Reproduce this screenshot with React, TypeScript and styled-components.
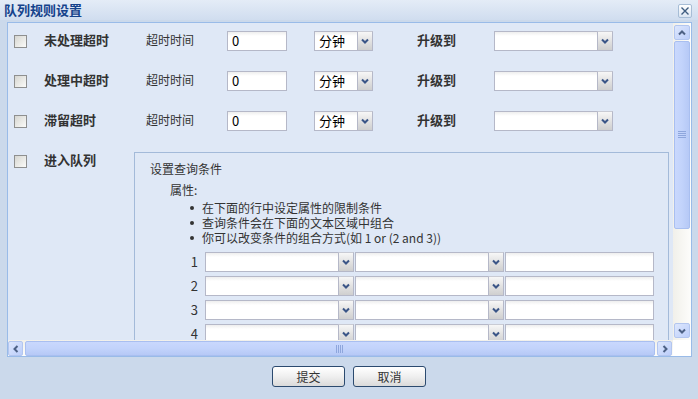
import styled, { createGlobalStyle } from 'styled-components'

const GlobalStyle = createGlobalStyle`
  body {
    margin: 0;
    background: #cbd9eb;
    font-family: "Noto Sans CJK SC", "Liberation Sans", sans-serif;
    font-size: 12px;
    color: #333;
  }
`

const Dialog = styled.div`
  width: 698px;
  height: 399px;
  display: flex;
  flex-direction: column;
  background: #cbd9eb;
  overflow: hidden;
`

const TitleBar = styled.div`
  height: 20px;
  display: flex;
  align-items: center;
  justify-content: space-between;
  padding: 0 6px 0 4px;
  background: linear-gradient(#e4ecf7, #d0ddef);
`

const Title = styled.div`
  font-size: 13px;
  font-weight: bold;
  color: #15428b;
  line-height: 16px;
`

const CloseButton = styled.div`
  width: 12px;
  height: 12px;
  margin-top: 2px;
  border: 1px solid #a7bdd6;
  border-radius: 2px;
  background: linear-gradient(#ffffff, #dbe5f2);
  display: flex;
  align-items: center;
  justify-content: center;
`

const Body = styled.div`
  padding: 2px 6px 0 7px;
`

const Panel = styled.div`
  width: 683px;
  height: 333px;
  border: 1px solid #99bbe8;
  background: #dfe8f6;
  display: grid;
  grid-template-columns: 665px 18px;
  grid-template-rows: 317px 16px;
`

const ScrollArea = styled.div`
  overflow: hidden;
  padding: 8px 0 0 6px;
  display: flex;
  flex-direction: column;
  gap: 20px;
`

const RuleRow = styled.div`
  display: grid;
  grid-template-columns: 30px 102px 81px 87px 103px 77px auto;
  align-items: center;
  height: 20px;
`

const QueueRow = styled.div`
  display: grid;
  grid-template-columns: 30px 90px 535px;
  align-items: start;
  margin-top: 1px;
`

const CheckBox = styled.div<{ $top?: number }>`
  width: 11px;
  height: 11px;
  margin-top: ${(p) => p.$top ?? 0}px;
  border: 1px solid #8e8f8f;
  background: linear-gradient(135deg, #d6d6d1, #fbfbf9);
`

const RuleLabel = styled.div<{ $top?: number }>`
  font-size: 13px;
  font-weight: bold;
  color: #333;
  line-height: 14px;
  margin-top: ${(p) => p.$top ?? -3}px;
  white-space: nowrap;
`

const FieldLabel = styled.div`
  font-size: 12px;
  color: #333;
  line-height: 14px;
  margin-top: -3px;
  white-space: nowrap;
`

const TextInput = styled.div<{ $w: number }>`
  width: ${(p) => p.$w}px;
  height: 20px;
  box-sizing: border-box;
  border: 1px solid #b5b8c8;
  background: linear-gradient(#eeeeee, #ffffff 4px);
  padding: 0 4px;
  font-size: 13px;
  line-height: 18px;
  color: #000;
`

const Select = styled.div<{ $w: number }>`
  width: ${(p) => p.$w}px;
  height: 20px;
  box-sizing: border-box;
  display: flex;
  border: 1px solid #b5b8c8;
  border-right: none;
  background: linear-gradient(#eeeeee, #ffffff 4px);
`

const SelectValue = styled.div`
  flex: 1;
  padding-left: 4px;
  font-size: 13px;
  line-height: 18px;
  color: #000;
`

const SelectTrigger = styled.div`
  width: 16px;
  height: 20px;
  margin-top: -1px;
  box-sizing: border-box;
  border: 1px solid #b5b8c8;
  border-top-color: #c9cbd4;
  background: linear-gradient(#f7f7f7, #e2e2e2 50%, #cfcfcf);
  display: flex;
  align-items: center;
  justify-content: center;
`

const ConditionBox = styled.div`
  height: 220px;
  border: 1px solid #a3bad9;
  padding: 8px 15px 0 15px;
`

const BoxTitle = styled.div`
  line-height: 16px;
  font-size: 12px;
`

const AttrLabel = styled.div`
  margin: 5px 0 0 20px;
  line-height: 16px;
`

const HintList = styled.ul`
  list-style: none;
  margin: 2px 0 0 0;
  padding: 0 0 0 40px;
`

const Hint = styled.li`
  display: flex;
  align-items: center;
  gap: 8px;
  height: 15px;
  line-height: 15px;
  white-space: nowrap;
  &::before {
    content: '';
    width: 4px;
    height: 4px;
    border-radius: 50%;
    background: #333;
  }
`

const ConditionGrid = styled.div`
  margin-top: 7px;
  display: grid;
  grid-template-columns: 54px 149px 149px 149px;
  grid-auto-rows: 20px;
  column-gap: 1px;
  row-gap: 4px;
`

const RowNumber = styled.div`
  text-align: right;
  padding-right: 6px;
  font-size: 13px;
  line-height: 20px;
`

const VScroll = styled.div`
  display: flex;
  flex-direction: column;
  padding: 2px 1px 2px 1px;
  background: linear-gradient(90deg, #f1f0ea, #fdfdfb);
`

const HScroll = styled.div`
  display: flex;
  padding: 1px 1px 0 0;
  background: linear-gradient(#f1f0ea, #fdfdfb);
`

const ScrollCorner = styled.div`
  background: #ffffff;
`

const ArrowButton = styled.div<{ $w: number; $h: number }>`
  width: ${(p) => p.$w}px;
  height: ${(p) => p.$h}px;
  box-sizing: border-box;
  flex: none;
  border: 1px solid #b3c6ef;
  border-radius: 2px;
  background: linear-gradient(135deg, #dde7fd, #bccefa);
  display: flex;
  align-items: center;
  justify-content: center;
`

const VThumb = styled.div`
  height: 188px;
  margin-top: 1px;
  box-sizing: border-box;
  border: 1px solid #a9bff0;
  border-radius: 2px;
  background: linear-gradient(90deg, #c9d8fd, #c2d3fb 50%, #b6c9f6);
  display: flex;
  align-items: center;
  justify-content: center;
`

const HThumb = styled.div`
  flex: 1;
  margin: 0 2px;
  box-sizing: border-box;
  border: 1px solid #a9bff0;
  border-radius: 2px;
  background: linear-gradient(#c9d8fd, #c2d3fb 50%, #b6c9f6);
  display: flex;
  align-items: center;
  justify-content: center;
`

const Track = styled.div`
  flex: 1;
`

const Footer = styled.div`
  display: flex;
  justify-content: center;
  gap: 8px;
  padding-top: 9px;
`

const Button = styled.button`
  width: 73px;
  height: 21px;
  border: 1px solid #2b4a6f;
  border-radius: 3px;
  background: linear-gradient(#ffffff, #f1f1f1 45%, #dadada);
  font-family: "Noto Sans CJK SC", "Liberation Sans", sans-serif;
  font-size: 12px;
  color: #333;
  padding: 0;
  line-height: 19px;
`

const Chevron = ({ dir = 'down', color = '#3a5587' }: { dir?: 'down' | 'up' | 'left' | 'right'; color?: string }) => {
  const rot = { down: 0, up: 180, left: 90, right: -90 }[dir]
  return (
    <svg width="8" height="8" viewBox="0 0 8 8" style={{ transform: `rotate(${rot}deg)` }}>
      <path d="M1 2.5 L4 5.5 L7 2.5" fill="none" stroke={color} strokeWidth="2" />
    </svg>
  )
}

const Grip = ({ vertical }: { vertical?: boolean }) => (
  <svg width="8" height="8" viewBox="0 0 8 8">
    {[1, 3, 5, 7].map((v) =>
      vertical ? (
        <line key={v} x1="0" y1={v - 0.5} x2="8" y2={v - 0.5} stroke="#8ea6dc" strokeWidth="1" />
      ) : (
        <line key={v} x1={v - 0.5} y1="0" x2={v - 0.5} y2="8" stroke="#8ea6dc" strokeWidth="1" />
      )
    )}
  </svg>
)

const Combo = ({ width, value }: { width: number; value?: string }) => (
  <Select $w={width}>
    <SelectValue>{value}</SelectValue>
    <SelectTrigger>
      <Chevron />
    </SelectTrigger>
  </Select>
)

const rules = ['未处理超时', '处理中超时', '滞留超时']

const hints = [
  '在下面的行中设定属性的限制条件',
  '查询条件会在下面的文本区域中组合',
  '你可以改变条件的组合方式(如 1 or (2 and 3))',
]

export default function App() {
  return (
    <>
      <GlobalStyle />
      <Dialog>
        <TitleBar>
          <Title>队列规则设置</Title>
          <CloseButton>
            <svg width="10" height="10" viewBox="0 0 10 10">
              <path d="M1.5 1.5 L8.5 8.5 M8.5 1.5 L1.5 8.5" stroke="#3e5c80" strokeWidth="1.4" />
            </svg>
          </CloseButton>
        </TitleBar>
        <Body>
          <Panel>
            <ScrollArea>
              {rules.map((rule) => (
                <RuleRow key={rule}>
                  <CheckBox />
                  <RuleLabel>{rule}</RuleLabel>
                  <FieldLabel>超时时间</FieldLabel>
                  <TextInput $w={60}>0</TextInput>
                  <Combo width={59} value="分钟" />
                  <RuleLabel>升级到</RuleLabel>
                  <Combo width={119} />
                </RuleRow>
              ))}
              <QueueRow>
                <CheckBox $top={3} />
                <RuleLabel $top={1}>进入队列</RuleLabel>
                <ConditionBox>
                  <BoxTitle>设置查询条件</BoxTitle>
                  <AttrLabel>属性:</AttrLabel>
                  <HintList>
                    {hints.map((h) => (
                      <Hint key={h}>{h}</Hint>
                    ))}
                  </HintList>
                  <ConditionGrid>
                    {[1, 2, 3, 4].flatMap((n) => [
                      <RowNumber key={`n${n}`}>{n}</RowNumber>,
                      <Combo key={`a${n}`} width={149} />,
                      <Combo key={`b${n}`} width={149} />,
                      <TextInput key={`c${n}`} $w={149} />,
                    ])}
                  </ConditionGrid>
                </ConditionBox>
              </QueueRow>
            </ScrollArea>
            <VScroll>
              <ArrowButton $w={16} $h={15}>
                <Chevron dir="up" color="#4d6185" />
              </ArrowButton>
              <VThumb>
                <Grip vertical />
              </VThumb>
              <Track />
              <ArrowButton $w={16} $h={15}>
                <Chevron dir="down" color="#4d6185" />
              </ArrowButton>
            </VScroll>
            <HScroll>
              <ArrowButton $w={15} $h={15}>
                <Chevron dir="left" color="#4d6185" />
              </ArrowButton>
              <HThumb>
                <Grip />
              </HThumb>
              <ArrowButton $w={15} $h={15}>
                <Chevron dir="right" color="#4d6185" />
              </ArrowButton>
            </HScroll>
            <ScrollCorner />
          </Panel>
        </Body>
        <Footer>
          <Button>提交</Button>
          <Button>取消</Button>
        </Footer>
      </Dialog>
    </>
  )
}
